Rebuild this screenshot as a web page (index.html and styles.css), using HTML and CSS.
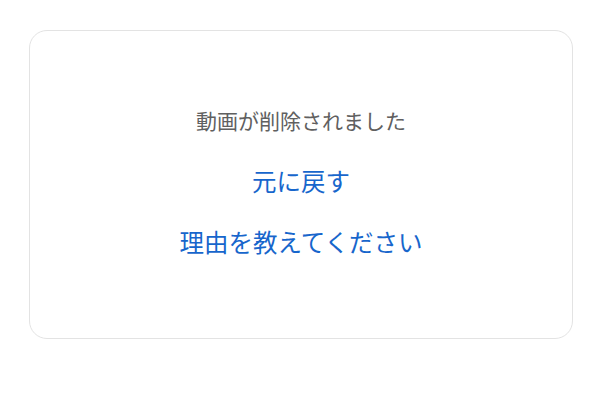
FILE: index.html
```html
<!DOCTYPE html>
<html lang="ja">
<head>
<meta charset="utf-8">
<link rel="stylesheet" href="styles.css">
</head>
<body>
<div class="card">
  <p class="msg">動画が削除されました</p>
  <a class="link" href="#">元に戻す</a>
  <a class="link" href="#">理由を教えてください</a>
</div>
</body>
</html>
```
FILE: styles.css
```css
html, body {
  margin: 0;
  padding: 0;
  background: #ffffff;
}
body {
  padding: 30px 0 0 29px;
  font-family: "Noto Sans CJK JP", "Noto Sans", sans-serif;
}
.card {
  box-sizing: border-box;
  width: 544px;
  height: 309px;
  border: 1.5px solid #e3e3e3;
  border-radius: 18px;
  display: flex;
  flex-direction: column;
  align-items: center;
  padding-top: 74px;
  gap: 31px;
}
.msg {
  margin: 0;
  font-size: 21px;
  line-height: 30px;
  color: #606060;
}
.link {
  font-size: 24.5px;
  line-height: 30px;
  color: #1766cc;
  text-decoration: none;
}
```
